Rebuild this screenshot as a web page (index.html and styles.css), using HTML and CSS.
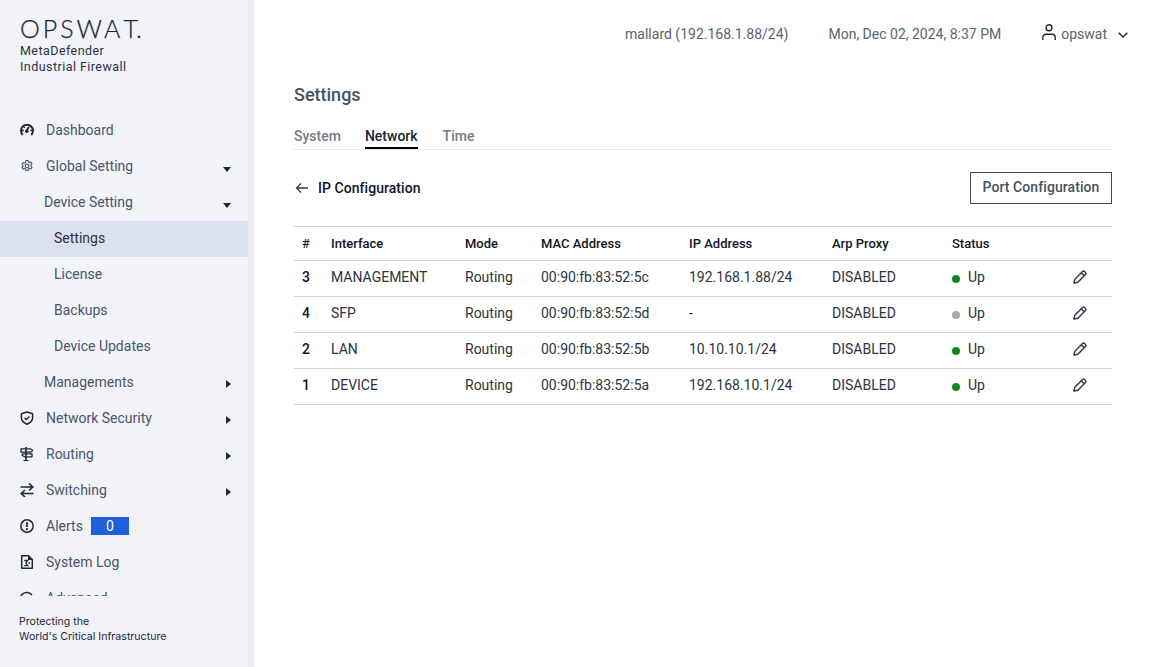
FILE: index.html
```html
<!DOCTYPE html>
<html lang="en">
<head>
<meta charset="utf-8">
<title>Settings</title>
<link rel="stylesheet" href="styles.css">
</head>
<body>
<div class="app">
  <aside class="sidebar">
    <div class="brand">
      <div class="logo">OPSWA<span class="logo-end">T.</span></div>
      <div class="product">MetaDefender<br>Industrial Firewall</div>
    </div>
    <nav class="nav">
      <div class="item">
        <svg class="ico" viewBox="0 0 14 14"><path d="M2.700 12A6 6 0 1 1 11.300 12" fill="none" stroke="currentColor" stroke-width="2"/><path d="M6.700 7.500 9 3.800" stroke="currentColor" stroke-width="1.700"/><circle cx="6.800" cy="8.200" r="1.800" fill="currentColor"/><path d="M2 7.500h1.800M10.300 7.500h1.800M3.800 3.800l1 1" stroke="currentColor" stroke-width="1.300"/></svg>
        <span>Dashboard</span>
      </div>
      <div class="item">
        <svg class="ico gear" viewBox="0 0 14 14"><circle cx="7" cy="7" r="1.900" fill="none" stroke="currentColor" stroke-width="1.100"/><path d="M5.900 1.500h2.200l.3 1.400 1.100.6 1.400-.5 1.100 1.900-1.100 1v1.200l1.100 1-1.100 1.900-1.400-.5-1.100.6-.3 1.400H5.900l-.3-1.400-1.100-.6-1.400.5-1.100-1.900 1.100-1V6.400l-1.100-1 1.100-1.900 1.400.5 1.100-.6z" fill="none" stroke="currentColor" stroke-width="1.100" stroke-linejoin="round"/></svg>
        <span>Global Setting</span><i class="caret down"></i>
      </div>
      <div class="item sub"><span>Device Setting</span><i class="caret down"></i></div>
      <div class="item leaf active"><span>Settings</span></div>
      <div class="item leaf"><span>License</span></div>
      <div class="item leaf"><span>Backups</span></div>
      <div class="item leaf"><span>Device Updates</span></div>
      <div class="item sub"><span>Managements</span><i class="caret right"></i></div>
      <div class="item">
        <svg class="ico" viewBox="0 0 14 14"><path d="M7 1 12.600 2.700V6.800C12.600 9.800 10.300 11.900 7 13.200 3.700 11.900 1.400 9.800 1.400 6.800V2.700Z" fill="none" stroke="currentColor" stroke-width="1.500" stroke-linejoin="round"/><path d="M4.500 6.800 6.300 8.600 9.500 5.400" fill="none" stroke="currentColor" stroke-width="1.400"/></svg>
        <span>Network Security</span><i class="caret right"></i>
      </div>
      <div class="item">
        <svg class="ico" viewBox="0 0 14 14"><path d="M6 0v14M3.500 13.800h5" stroke="currentColor" stroke-width="1.600" fill="none"/><path d="M1 1.800h9.500l2.300 1.700-2.300 1.700H1zM2.500 6.800H12v3H4.500L2 8.300z" fill="none" stroke="currentColor" stroke-width="1.300" stroke-linejoin="round"/></svg>
        <span>Routing</span><i class="caret right"></i>
      </div>
      <div class="item">
        <svg class="ico" viewBox="0 0 14 14"><path d="M.5 4h12M9 .5 12.800 4 9 7.500M13.500 10.500H1.500M5 7 1.200 10.500 5 14" fill="none" stroke="currentColor" stroke-width="1.600"/></svg>
        <span>Switching</span><i class="caret right"></i>
      </div>
      <div class="item">
        <svg class="ico" viewBox="0 0 14 14"><circle cx="7" cy="7" r="6.200" fill="none" stroke="currentColor" stroke-width="1.500"/><path d="M7 3.200v4.800" stroke="currentColor" stroke-width="1.800"/><circle cx="7" cy="10.200" r="1.100" fill="currentColor"/></svg>
        <span>Alerts</span><b class="badge">0</b>
      </div>
      <div class="item">
        <svg class="ico" viewBox="0 0 14 14"><path d="M1.700.8H8.500L12.300 4.600V13.200H1.700Z" fill="none" stroke="currentColor" stroke-width="1.500" stroke-linejoin="round"/><path d="M8 1V5H12.300Z" fill="currentColor"/><path d="M4.300 5.500h3.400L5.900 8l1.800 2.600H4.300M8.500 8h1.500" fill="none" stroke="currentColor" stroke-width="1.300"/></svg>
        <span>System Log</span>
      </div>
      <div class="item">
        <svg class="ico" viewBox="0 0 14 14"><path d="M1.500 12A6 6 0 0 1 12 4M4 12.500A6 6 0 0 1 12.500 7" fill="none" stroke="currentColor" stroke-width="1.500"/></svg>
        <span>Advanced</span><i class="caret right"></i>
      </div>
    </nav>
    <div class="tagline">Protecting the<br>World's Critical Infrastructure</div>
  </aside>
  <main class="main">
    <header class="topbar">
      <span>mallard (192.168.1.88/24)</span>
      <span class="date">Mon, Dec 02, 2024, 8:37 PM</span>
      <span class="user">
        <svg class="user-ico" viewBox="0 0 14 16"><circle cx="7" cy="3.800" r="3" fill="none" stroke="currentColor" stroke-width="1.400"/><path d="M.8 16V13.500A3.200 3.200 0 0 1 4 10.300h6A3.200 3.200 0 0 1 13.200 13.500V16" fill="none" stroke="currentColor" stroke-width="1.400"/></svg>
        <span class="uname">opswat</span>
        <svg class="chev" viewBox="0 0 10 6"><path d="M.7.700 5 5l4.300-4.300" fill="none" stroke="currentColor" stroke-width="1.400"/></svg>
      </span>
    </header>
    <section class="content">
      <h1 class="title">Settings</h1>
      <div class="tabs">
        <span class="tab">System</span>
        <span class="tab current">Network</span>
        <span class="tab">Time</span>
      </div>
      <div class="toolbar">
        <div class="back">
          <svg class="arrow" viewBox="0 0 14 12"><path d="M13 6H1.500M6 1.500 1.500 6 6 10.500" fill="none" stroke="currentColor" stroke-width="1.300"/></svg>
          <span>IP Configuration</span>
        </div>
        <button class="btn">Port Configuration</button>
      </div>
      <table class="grid">
        <colgroup>
          <col class="c1"><col class="c2"><col class="c3"><col class="c4"><col class="c5"><col class="c6"><col class="c7"><col class="c8">
        </colgroup>
        <thead>
          <tr><th>#</th><th>Interface</th><th>Mode</th><th>MAC Address</th><th>IP Address</th><th>Arp Proxy</th><th>Status</th><th></th></tr>
        </thead>
        <tbody>
          <tr><td class="num">3</td><td>MANAGEMENT</td><td>Routing</td><td>00:90:fb:83:52:5c</td><td>192.168.1.88/24</td><td>DISABLED</td><td><i class="dot on"></i>Up</td><td class="act"><svg class="pen" viewBox="0 0 16 16"><path d="M2 14l.8-3.800L10.500 2.500a1.500 1.500 0 0 1 2.100 0l.9.9a1.500 1.500 0 0 1 0 2.100L5.800 13.200ZM9.300 3.700l3 3" fill="none" stroke="currentColor" stroke-width="1.400" stroke-linejoin="round"/></svg></td></tr>
          <tr><td class="num">4</td><td>SFP</td><td>Routing</td><td>00:90:fb:83:52:5d</td><td>-</td><td>DISABLED</td><td><i class="dot off"></i>Up</td><td class="act"><svg class="pen" viewBox="0 0 16 16"><path d="M2 14l.8-3.800L10.500 2.500a1.500 1.500 0 0 1 2.100 0l.9.9a1.500 1.500 0 0 1 0 2.100L5.800 13.200ZM9.300 3.700l3 3" fill="none" stroke="currentColor" stroke-width="1.400" stroke-linejoin="round"/></svg></td></tr>
          <tr><td class="num">2</td><td>LAN</td><td>Routing</td><td>00:90:fb:83:52:5b</td><td>10.10.10.1/24</td><td>DISABLED</td><td><i class="dot on"></i>Up</td><td class="act"><svg class="pen" viewBox="0 0 16 16"><path d="M2 14l.8-3.800L10.500 2.500a1.500 1.500 0 0 1 2.100 0l.9.9a1.500 1.500 0 0 1 0 2.100L5.800 13.200ZM9.300 3.700l3 3" fill="none" stroke="currentColor" stroke-width="1.400" stroke-linejoin="round"/></svg></td></tr>
          <tr><td class="num">1</td><td>DEVICE</td><td>Routing</td><td>00:90:fb:83:52:5a</td><td>192.168.10.1/24</td><td>DISABLED</td><td><i class="dot on"></i>Up</td><td class="act"><svg class="pen" viewBox="0 0 16 16"><path d="M2 14l.8-3.800L10.500 2.500a1.500 1.500 0 0 1 2.100 0l.9.9a1.500 1.500 0 0 1 0 2.100L5.800 13.200ZM9.300 3.700l3 3" fill="none" stroke="currentColor" stroke-width="1.400" stroke-linejoin="round"/></svg></td></tr>
        </tbody>
      </table>
    </section>
  </main>
</div>
</body>
</html>
```

FILE: styles.css
```css
* { box-sizing: border-box; }
html, body { margin: 0; height: 100%; overflow: hidden; }
body { font-family: Roboto, "Liberation Sans", sans-serif; font-size: 14px; color: #1d2433; background: #fff; }
.app { display: flex; height: 667px; }

.sidebar { width: 254px; flex: none; height: 667px; background: linear-gradient(to right, #f1f3f9 248px, #eeeff5 248px, #ebecf2 254px); display: flex; flex-direction: column; }
.brand { height: 113px; width: 249px; padding: 15px 0 0 20px; flex: none; background: #f1f3f9; border-right: 1px solid #e3e6f2; }
.logo { font-family: Lato, sans-serif; font-weight: 300; font-size: 25px; line-height: 26px; letter-spacing: 3px; color: #1d2838; -webkit-text-stroke: .25px #1d2838; }
.logo-end { letter-spacing: 0; }
.product { font-family: Roboto, sans-serif; font-size: 12.5px; line-height: 16px; letter-spacing: .45px; color: #2a3342; margin-top: 2px; }

.nav { height: 483px; overflow: hidden; flex: none; width: 249px; background: #f1f3f9; border-right: 1px solid #e3e6f2; }
.item { height: 36px; display: flex; align-items: center; padding: 0 0 2px 20px; color: #4a5568; font-size: 14px; position: relative; }
.ico { width: 14px; height: 14px; margin-right: 12px; color: #1d2838; flex: none; }
.gear { color: #4a5568; }
.sub { padding-left: 44px; }
.leaf { padding-left: 54px; }
.active { background: #dce1f0; color: #2a3342; }
.caret { position: absolute; width: 0; height: 0; }
.caret.down { right: 17px; top: 18px; border-left: 4.500px solid transparent; border-right: 4.500px solid transparent; border-top: 5px solid #1d2838; }
.caret.right { right: 17px; top: 15px; border-top: 4.500px solid transparent; border-bottom: 4.500px solid transparent; border-left: 5px solid #1d2838; }
.badge { width: 38px; height: 18px; margin-left: 8px; background: #1f5fdc; color: #fff; text-align: center; font-weight: 400; font-size: 14px; line-height: 18px; }
.tagline { font-family: Inter, sans-serif; font-size: 10.6px; line-height: 15px; color: #1d2838; padding: 18px 0 0 19px; background: #f1f3f9; flex: 1; width: 248px; }

.main { flex: 1; min-width: 0; }
.topbar { height: 68px; display: flex; align-items: center; justify-content: flex-end; color: #5a6472; font-size: 14px; padding-right: 30px; }
.date { margin-left: 40px; }
.user { margin-left: 40px; display: flex; align-items: center; }
.user-ico { width: 14px; height: 16px; color: #1d2838; margin-right: 5px; margin-top: -5px; margin-left: 1px; }
.chev { width: 10px; height: 6px; color: #1d2838; margin-left: 11px; margin-top: 2px; margin-right: 1px; }

.content { padding: 0 47px 0 40px; }
.title { margin: 16px 0 0; font-size: 18px; line-height: 22px; font-weight: 500; color: #465260; }
.tabs { display: flex; gap: 24px; margin-top: 22px; border-bottom: 1px solid #e6e6e6; height: 22px; }
.tab { font-size: 14px; font-weight: 500; color: #757b84; line-height: 16px; height: 21px; }
.tab.current { color: #1d2433; border-bottom: 2px solid #000; margin-right: 1px; }
.toolbar { display: flex; justify-content: space-between; align-items: center; margin-top: 22px; height: 32px; }
.back { display: flex; align-items: center; font-weight: 500; font-size: 14px; letter-spacing: .05px; color: #11151f; }
.arrow { width: 14px; height: 12px; margin-right: 9px; margin-left: 1px; color: #333b48; }
.btn { width: 142px; height: 32px; background: #fff; border: 1px solid #404a58; border-radius: 0; font: 500 14px Roboto, sans-serif; letter-spacing: .08px; color: #465260; padding: 0 0 2px; }

.grid { width: 818px; border-collapse: collapse; table-layout: fixed; margin-top: 22px; border-top: 1px solid #d4d4d4; }
.c1 { width: 29px; } .c2 { width: 134px; } .c3 { width: 76px; } .c4 { width: 148px; } .c5 { width: 143px; } .c6 { width: 120px; } .c7 { width: 112px; } .c8 { width: 56px; }
.grid th { height: 34px; text-align: left; font-size: 13px; font-weight: 500; color: #11151f; padding: 0 0 0 8px; border-bottom: 1px solid #d4d4d4; }
.grid td { height: 36px; font-size: 14px; color: #2c3440; padding: 0 0 4px 8px; border-bottom: 1px solid #d4d4d4; }
.grid td.num { font-weight: 500; color: #11151f; }
.grid td.act { padding-left: 16px; }
.dot { display: inline-block; width: 8px; height: 8px; border-radius: 50%; margin-right: 8px; vertical-align: -1px; }
.dot.on { background: #0f8a1f; }
.dot.off { background: #a8abb4; }
.pen { width: 16px; height: 16px; color: #2c3440; display: block; }
```
